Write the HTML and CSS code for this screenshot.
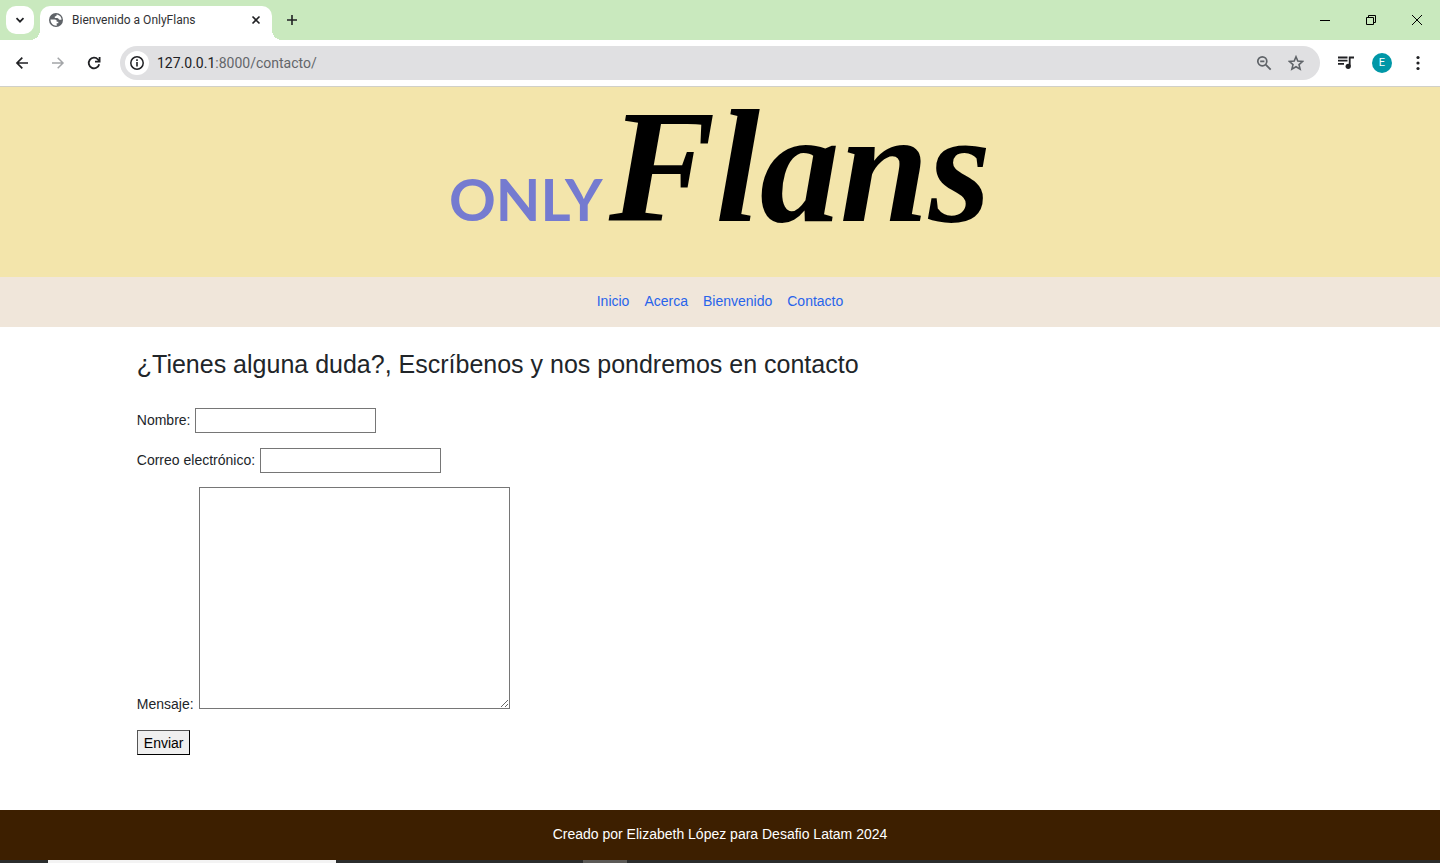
FILE: index.html
```html
<!DOCTYPE html>
<html lang="es">
<head>
<meta charset="utf-8">
<meta name="viewport" content="width=device-width, initial-scale=1">
<title>Bienvenido a OnlyFlans</title>
<link rel="stylesheet" href="styles.css">
</head>
<body>
<div class="tabstrip">
  <button class="tab-search" type="button" aria-label="Buscar pestañas"><svg width="10" height="10" viewBox="0 0 10 10"><path d="M1.5 3.2 5 6.7 8.500 3.200" fill="none" stroke="#202124" stroke-width="1.7"/></svg></button>
  <div class="tab">
    <svg class="globe" width="16" height="16" viewBox="0 0 16 16"><circle cx="8" cy="8" r="7" fill="#5f6368"/><path d="M2.500 7.500h4.200c1.800 0 2 .8 2 2.200h1.600v1.600H8.700v2.400c-3.200.3-6.200-2.500-6.200-6.200zM8.600 2.500c.2 1.400-.5 1.800-1.800 1.900v1.700h2.400c1 0 1.300 1 2.200 1.700h2.100c.2-2.500-1.600-4.900-4.900-5.300z" fill="#fff"/></svg>
    <span class="tab-title">Bienvenido a OnlyFlans</span>
    <button class="bare" type="button" aria-label="Cerrar pestaña"><svg width="10" height="10" viewBox="0 0 10 10"><path d="m1.500 1.500 7 7m0-7-7 7" stroke="#202124" stroke-width="1.600"/></svg></button>
  </div>
  <button class="bare new-tab" type="button" aria-label="Nueva pestaña"><svg width="12" height="12" viewBox="0 0 12 12"><path d="M6 1v10M1 6h10" stroke="#202124" stroke-width="1.600"/></svg></button>
  <div class="window-controls">
    <button class="bare" type="button" aria-label="Minimizar"><svg width="12" height="12" viewBox="0 0 12 12"><path d="M1 6.500h10" stroke="#000"/></svg></button>
    <button class="bare" type="button" aria-label="Restaurar"><svg width="12" height="12" viewBox="0 0 12 12"><path d="M1.500 3.500h7v7h-7zM3.500 3.500v-2h7v7h-2" fill="none" stroke="#000"/></svg></button>
    <button class="bare" type="button" aria-label="Cerrar"><svg width="12" height="12" viewBox="0 0 12 12"><path d="m1 1 10 10M11 1 1 11" stroke="#000"/></svg></button>
  </div>
</div>
<div class="toolbar">
  <button class="bare" type="button" aria-label="Atrás"><svg width="16" height="16" viewBox="0 0 16 16"><path d="M14 8H3m5.300-5.300L3 8l5.300 5.300" fill="none" stroke="#202124" stroke-width="1.700"/></svg></button>
  <button class="bare" type="button" aria-label="Adelante"><svg width="16" height="16" viewBox="0 0 16 16"><path d="M2 8h11M7.700 2.700 13 8l-5.300 5.300" fill="none" stroke="#a3a5a8" stroke-width="1.500"/></svg></button>
  <button class="bare" type="button" aria-label="Recargar"><svg width="16" height="16" viewBox="0 0 16 16"><path d="M13.200 9.200A5.300 5.300 0 1 1 12 4.500L13.300 6M13.600 2v4.600H9" fill="none" stroke="#202124" stroke-width="1.800"/></svg></button>
  <div class="omnibox">
    <button class="bare site-info" type="button" aria-label="Información del sitio"><svg width="16" height="16" viewBox="0 0 16 16"><circle cx="8" cy="8" r="6.200" fill="none" stroke="#202124" stroke-width="1.500"/><path d="M8 7v4.500M8 4.300v1.600" stroke="#202124" stroke-width="1.600"/></svg></button>
    <div class="url"><span class="host">127.0.0.1</span>:8000/contacto/</div>
    <button class="bare" type="button" aria-label="Zoom"><svg width="16" height="16" viewBox="0 0 16 16"><circle cx="6.300" cy="6.300" r="4.500" fill="none" stroke="#5f6368" stroke-width="1.700"/><path d="M4.200 6.300h4.200M9.700 9.700l5 5" stroke="#5f6368" stroke-width="1.800"/></svg></button>
    <button class="bare" type="button" aria-label="Marcador"><svg width="16" height="16" viewBox="0 0 16 16"><path d="m8 1.800 1.800 4.300 4.700.4L11 9.600l1.100 4.500L8 11.700l-4.100 2.400L5 9.600 1.500 6.500l4.700-.4z" fill="none" stroke="#5f6368" stroke-width="1.600"/></svg></button>
  </div>
  <div class="tools">
    <button class="bare" type="button" aria-label="Controles multimedia"><svg width="16" height="16" viewBox="0 0 16 16"><path d="M0 2.500h9.500M0 5.700h9.500M0 8.900h6M11.700 11V2.500H16" fill="none" stroke="#202124" stroke-width="1.800"/><circle cx="10.200" cy="11.300" r="2.600" fill="#202124"/></svg></button>
    <button class="bare avatar" type="button">E</button>
    <button class="bare" type="button" aria-label="Menú"><svg width="16" height="16" viewBox="0 0 16 16" fill="#202124"><circle cx="8" cy="2.500" r="1.600"/><circle cx="8" cy="8" r="1.600"/><circle cx="8" cy="13.500" r="1.600"/></svg></button>
  </div>
</div>
<header class="banner">
  <div class="logo"><span class="logo-only">ONLY</span><span class="logo-flans">Flans</span></div>
</header>
<nav class="nav">
  <a href="#">Inicio</a><a href="#">Acerca</a><a href="#">Bienvenido</a><a href="#">Contacto</a>
</nav>
<main class="content">
  <h1>¿Tienes alguna duda?, Escríbenos y nos pondremos en contacto</h1>
  <form>
    <div class="field"><label for="nombre">Nombre:</label><input id="nombre" type="text"></div>
    <div class="field"><label for="correo">Correo electrónico:</label><input id="correo" type="email"></div>
    <div class="field field-message"><label for="mensaje">Mensaje:</label><textarea id="mensaje"></textarea></div>
    <button class="send" type="submit">Enviar</button>
  </form>
</main>
<footer class="footer">Creado por Elizabeth López para Desafio Latam 2024</footer>
<div class="taskbar"><div class="task-search"></div><div class="task-active"></div></div>
</body>
</html>
```

FILE: styles.css
```css
* { box-sizing: border-box; }
body {
  margin: 0;
  min-height: 100vh;
  display: flex;
  flex-direction: column;
  background: #fff;
  color: #212529;
  font: 14px/22px "Liberation Sans", Arial, sans-serif;
}
svg { display: block; }
.bare {
  display: flex;
  align-items: center;
  justify-content: center;
  padding: 0;
  border: 0;
  background: none;
}
.tabstrip {
  display: flex;
  align-items: center;
  height: 40px;
  padding-left: 6px;
  background: #c9e9be;
}
.tab-search {
  display: flex;
  align-items: center;
  justify-content: center;
  width: 28px;
  height: 28px;
  padding: 0;
  border: 0;
  border-radius: 10px;
  background: #fff;
}
.tab {
  position: relative;
  display: flex;
  align-items: center;
  gap: 8px;
  align-self: flex-end;
  width: 232px;
  height: 34px;
  margin-left: 6px;
  padding: 0 11px 6px 8px;
  border-radius: 10px 10px 0 0;
  background: #fff;
}
.tab::before, .tab::after {
  content: "";
  position: absolute;
  bottom: 0;
  width: 10px;
  height: 10px;
}
.tab::before { right: 100%; background: radial-gradient(circle at 0 0, transparent 10px, #fff 10px); }
.tab::after { left: 100%; background: radial-gradient(circle at 100% 0, transparent 10px, #fff 10px); }
.tab-title {
  flex: 1;
  color: #303134;
  font: 12px/16px Roboto, sans-serif;
  white-space: nowrap;
}
.new-tab { margin-left: 14px; }
.window-controls { display: flex; margin-left: auto; }
.window-controls .bare { width: 46px; height: 40px; }
.toolbar {
  display: flex;
  align-items: center;
  gap: 20px;
  height: 47px;
  padding: 0 14px;
  border-bottom: 1px solid #d0d0c8;
  background: #fff;
}
.omnibox {
  flex: 1;
  display: flex;
  align-items: center;
  gap: 16px;
  height: 34px;
  margin-left: -2px;
  padding: 0 16px 0 5px;
  border-radius: 17px;
  background: #e0e0e2;
}
.site-info { width: 24px; height: 24px; border-radius: 50%; background: #fff; }
.url {
  flex: 1;
  margin-left: -8px;
  color: #63666a;
  font: 14px/20px Roboto, sans-serif;
}
.host { color: #202124; }
.tools { display: flex; align-items: center; gap: 18px; margin-left: -2px; }
.tools .avatar {
  width: 20px;
  height: 20px;
  border-radius: 50%;
  background: #0097a7;
  color: #fff;
  font: 11px/20px Roboto, sans-serif;
}
.banner {
  display: flex;
  justify-content: center;
  height: 190px;
  background: #f3e5ab;
}
.logo { display: flex; align-items: baseline; gap: 6px; line-height: 160px; white-space: nowrap; }
.logo-only { color: #757bd0; font-family: Lato, sans-serif; font-size: 58px; font-weight: 700; }
.logo-flans { color: #000; font-family: "Liberation Serif", serif; font-size: 160px; font-style: italic; font-weight: 700; }
.nav {
  display: flex;
  justify-content: center;
  gap: 15px;
  padding: 13px 0 15px;
  background: #f0e6da;
}
.nav a { color: #2864eb; text-decoration: none; }
.content { flex: 1; width: 81%; margin: 0 auto; padding-top: 22px; }
h1 { margin: 0 0 28px; font-size: 25px; font-weight: 400; line-height: 31px; }
.field { display: flex; align-items: center; gap: 5px; margin-bottom: 15px; line-height: 20px; }
.field input { width: 181px; height: 25px; padding: 1px 2px; border: 1px solid #767676; font: inherit; }
.field label { padding-bottom: 1px; }
.field-message { align-items: flex-end; margin: -1px 0 21px; }
.field-message label { line-height: 16px; margin-bottom: -4px; }
.field textarea { width: 311px; height: 222px; padding: 2px; border: 1px solid #767676; background: #fff; font: inherit; resize: both; }
.send {
  display: block;
  height: 25px;
  padding: 0 6px;
  border: 1px solid #000;
  border-top-color: #555;
  border-left-color: #555;
  background: #efefef;
  color: #000;
  font: inherit;
}
.footer { padding: 13px 0 15px; background: #3d1f00; color: #fff; text-align: center; }
.taskbar { display: flex; height: 3px; padding-left: 48px; background: #2b2d2d; }
.task-search { width: 288px; background: #f3f3f3; }
.task-active { width: 44px; margin-left: 247px; background: #5c5a57; }
```
